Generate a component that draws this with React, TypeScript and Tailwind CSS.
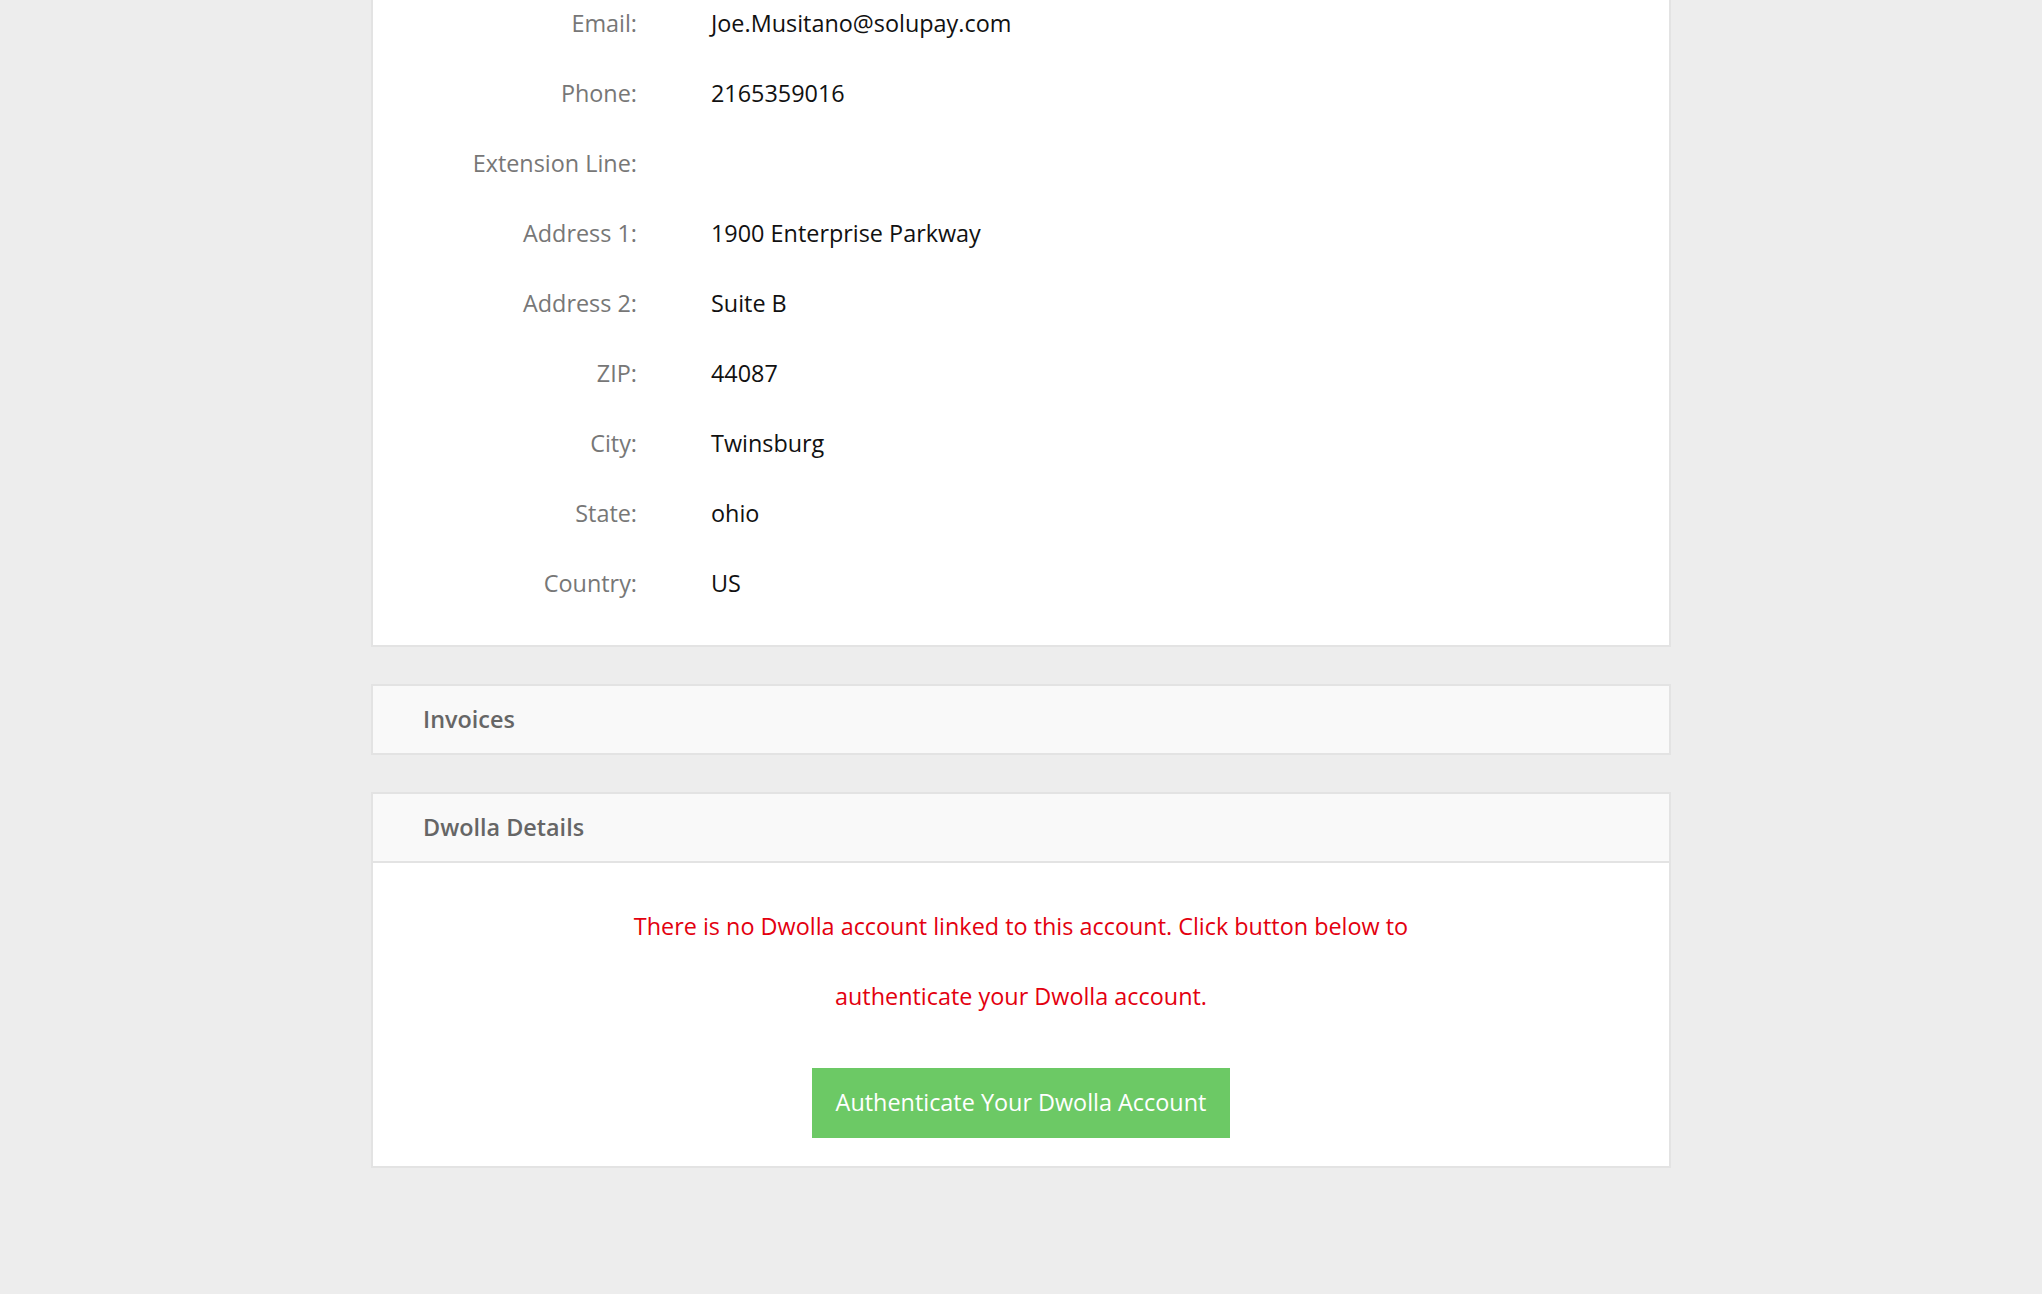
import React from 'react';

const details = [
  { label: 'Email:', value: 'Joe.Musitano@solupay.com' },
  { label: 'Phone:', value: '2165359016' },
  { label: 'Extension Line:', value: '' },
  { label: 'Address 1:', value: '1900 Enterprise Parkway' },
  { label: 'Address 2:', value: 'Suite B' },
  { label: 'ZIP:', value: '44087' },
  { label: 'City:', value: 'Twinsburg' },
  { label: 'State:', value: 'ohio' },
  { label: 'Country:', value: 'US' },
];

const App: React.FC = () => {
  return (
    <div className="min-h-screen bg-[#ededed] font-['Open_Sans',sans-serif] overflow-hidden">
      <div className="w-[1300px] mx-auto">
        {/* Contact details (page is scrolled, panel top is above the fold) */}
        <div className="-mt-[11px] bg-white border-2 border-t-0 border-[#e3e3e3] pb-[26px] mb-[37px]">
          {details.map((row) => (
            <div key={row.label} className="flex items-center h-[70px] text-[23.4px]">
              <span className="w-[264px] text-right text-[#777777]">{row.label}</span>
              <span className="ml-[74px] text-[#111111]">{row.value}</span>
            </div>
          ))}
        </div>

        {/* Invoices */}
        <div className="border-2 border-[#e3e3e3] mb-[37px]">
          <div className="h-[67px] flex items-center pl-[50px] bg-[#f9f9f9]">
            <h2 className="text-[23.4px] font-semibold text-[#666666]">Invoices</h2>
          </div>
        </div>

        {/* Dwolla */}
        <div className="border-2 border-[#e3e3e3] bg-white">
          <div className="h-[69px] flex items-center pl-[50px] bg-[#f9f9f9] border-b-2 border-[#e3e3e3]">
            <h2 className="text-[23.4px] font-semibold text-[#666666]">Dwolla Details</h2>
          </div>
          <div className="pt-[28px] pb-[28px] flex flex-col items-center">
            <p className="w-[840px] text-center text-[23.4px] leading-[70px] text-[#e3000f]">
              There is no Dwolla account linked to this account. Click button below to authenticate your Dwolla account.
            </p>
            <button className="mt-[37px] h-[70px] px-[24px] bg-[#6cc965] text-white text-[23.4px]">
              Authenticate Your Dwolla Account
            </button>
          </div>
        </div>
      </div>
    </div>
  );
};

export default App;
